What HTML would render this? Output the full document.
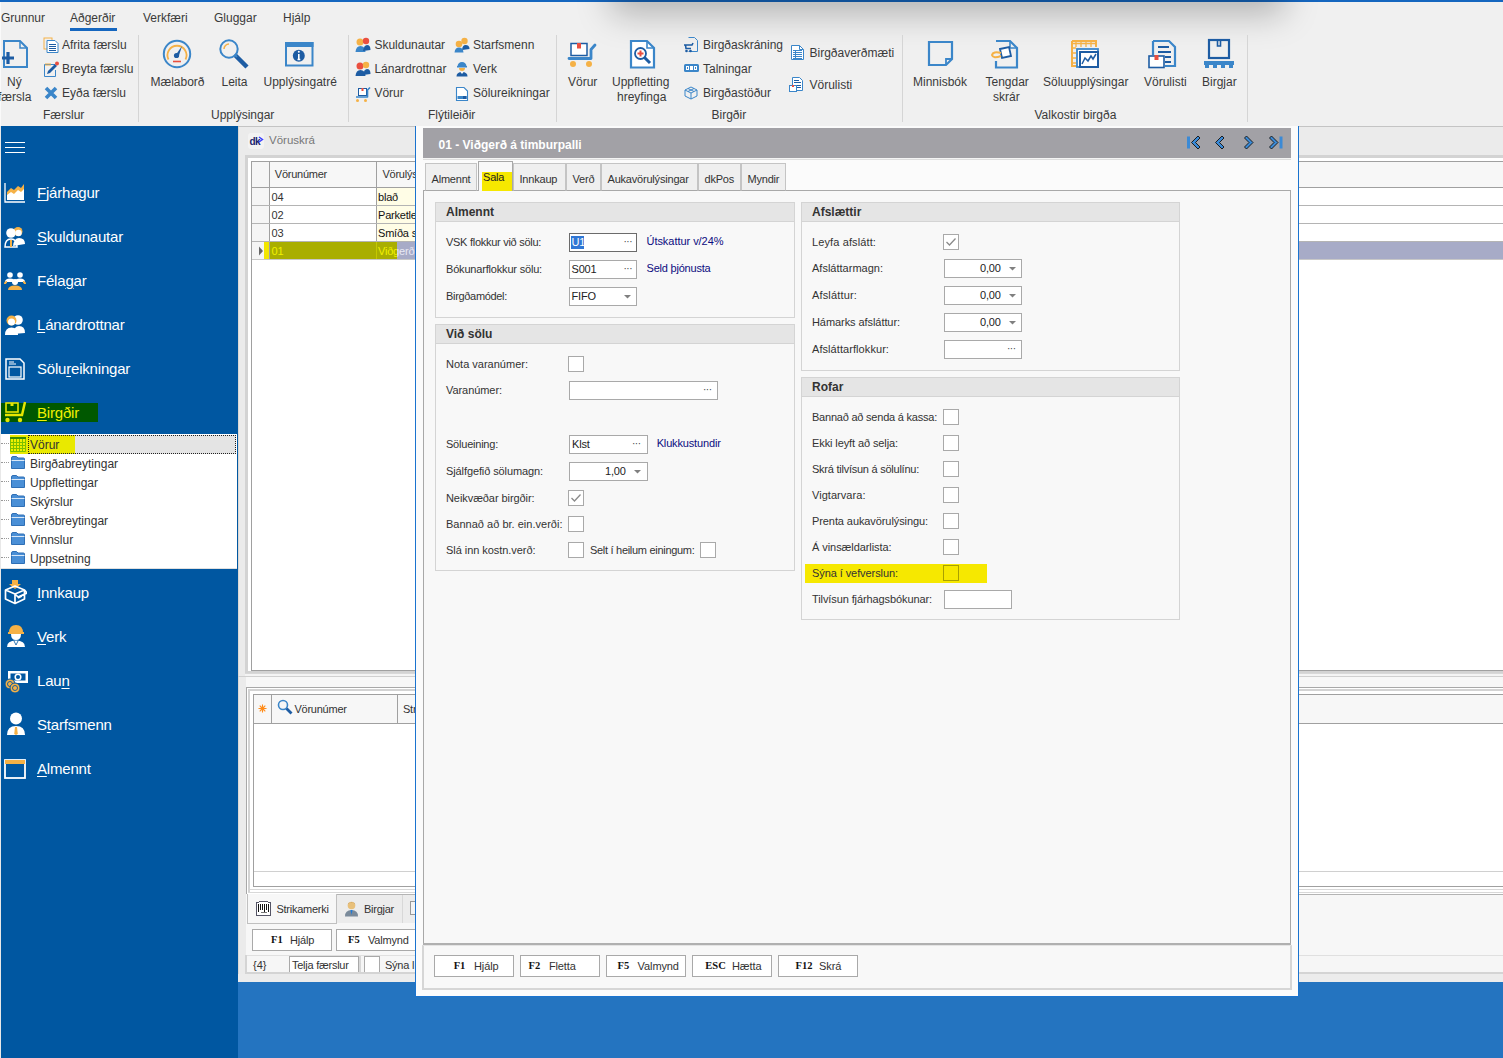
<!DOCTYPE html>
<html><head><meta charset="utf-8">
<style>
*{margin:0;padding:0;box-sizing:border-box}
html,body{width:1503px;height:1058px;overflow:hidden;background:#2474c0;font-family:"Liberation Sans",sans-serif;color:#333;position:relative}
.a{position:absolute}
.t{position:absolute;white-space:nowrap;line-height:1}
.cb{position:absolute;width:16px;height:16px;background:#fff;border:1px solid #a9a9a9}
.inp{position:absolute;background:#fff;border:1px solid #a9a9a9}
</style></head><body>
<div class="a" style="left:0px;top:0px;width:1503px;height:126px;background:#f0f0f0;"></div>
<div class="a" style="left:0px;top:0px;width:1503px;height:2px;background:#1566bf;"></div>
<div class="a" style="left:625px;top:-40px;width:645px;height:40px;box-shadow:0 0 34px 14px rgba(0,0,0,0.26)"></div>
<div class="a" style="left:0px;top:2px;width:1px;height:124px;background:#fafafa;"></div>
<div class="t" style="left:1px;top:12.00px;font-size:12px;color:#3a3a3a;">Grunnur</div>
<div class="t" style="left:70px;top:12.00px;font-size:12px;color:#3a3a3a;">Aðgerðir</div>
<div class="t" style="left:143px;top:12.00px;font-size:12px;color:#3a3a3a;">Verkfæri</div>
<div class="t" style="left:214px;top:12.00px;font-size:12px;color:#3a3a3a;">Gluggar</div>
<div class="t" style="left:283px;top:12.00px;font-size:12px;color:#3a3a3a;">Hjálp</div>
<div class="a" style="left:70px;top:28px;width:47px;height:3px;background:#1566bf;"></div>
<div class="a" style="left:138px;top:35px;width:1px;height:87px;background:#d5d5d5;"></div>
<div class="a" style="left:348px;top:35px;width:1px;height:87px;background:#d5d5d5;"></div>
<div class="a" style="left:556px;top:35px;width:1px;height:87px;background:#d5d5d5;"></div>
<div class="a" style="left:902px;top:35px;width:1px;height:87px;background:#d5d5d5;"></div>
<div class="a" style="left:1247px;top:35px;width:1px;height:87px;background:#d5d5d5;"></div>
<div class="t" style="left:43px;top:109.00px;font-size:12px;color:#3a3a3a;">Færslur</div>
<div class="t" style="left:211px;top:109.00px;font-size:12px;color:#3a3a3a;">Upplýsingar</div>
<div class="t" style="left:428px;top:109.00px;font-size:12px;color:#3a3a3a;">Flýtileiðir</div>
<div class="t" style="left:711.5px;top:109.00px;font-size:12px;color:#3a3a3a;">Birgðir</div>
<div class="t" style="left:1034.5px;top:109.00px;font-size:12px;color:#3a3a3a;">Valkostir birgða</div>
<svg class="a" style="left:1px;top:38px" width="30" height="32" viewBox="0 0 30 32"><path d="M3 3 H19 L26 10 V29 H3 Z" fill="none" stroke="#3b86c9" stroke-width="2"/><path d="M19 3 V10 H26" fill="none" stroke="#3b86c9" stroke-width="1.5"/><path d="M1 20 H13 M7 14 V26" stroke="#1d5ca3" stroke-width="3.2"/></svg>
<div class="t" style="left:7px;top:76.00px;font-size:12px;color:#3a3a3a;">Ný</div>
<div class="t" style="left:-2px;top:91.00px;font-size:12px;color:#3a3a3a;">færsla</div>
<svg class="a" style="left:43px;top:37px" width="16" height="16" viewBox="0 0 16 16"><rect x="1" y="1" width="8" height="11" fill="none" stroke="#f5b146" stroke-width="1"/><path d="M4 3.5 H12 L15 6.5 V15.5 H4 Z" fill="#fff" stroke="#3b86c9" stroke-width="1"/><path d="M6 7.5 H13 M6 9.5 H13 M6 11.5 H13 M6 13.5 H13" stroke="#1d5ca3" stroke-width="1"/></svg>
<div class="t" style="left:62px;top:39.00px;font-size:12px;color:#3a3a3a;">Afrita færslu</div>
<svg class="a" style="left:43px;top:61px" width="16" height="16" viewBox="0 0 16 16"><path d="M1.5 3.5 H12 M1.5 3.5 V15.5 H12.5 V9" fill="none" stroke="#3b86c9" stroke-width="1"/><path d="M3 2 V5 M5 2 V5 M7 2 V5" stroke="#f5b146" stroke-width="1"/><path d="M4 13 L5 10 L12 3 L14 5 L7 12 Z" fill="#1d5ca3"/><circle cx="14" cy="2.5" r="2" fill="#ea4f3f"/></svg>
<div class="t" style="left:62px;top:63.00px;font-size:12px;color:#3a3a3a;">Breyta færslu</div>
<svg class="a" style="left:44px;top:86px" width="14" height="14" viewBox="0 0 14 14"><path d="M2 2 L12 12 M12 2 L2 12" stroke="#3b86c9" stroke-width="3.6"/></svg>
<div class="t" style="left:62px;top:87.00px;font-size:12px;color:#3a3a3a;">Eyða færslu</div>
<svg class="a" style="left:162px;top:39px" width="30" height="30" viewBox="0 0 30 30"><circle cx="15" cy="15" r="13.2" fill="none" stroke="#3b86c9" stroke-width="2"/><path d="M6.5 20.5 A9.5 9.5 0 1 1 23.5 20.5" fill="none" stroke="#f5b146" stroke-width="1.8"/><path d="M13 17 L20 7 L16.5 18 Z" fill="#1d5ca3"/><circle cx="14.5" cy="16.5" r="2.6" fill="#1d5ca3"/><path d="M11 22.5 H19" stroke="#ea4f3f" stroke-width="1.6"/></svg>
<div class="t" style="left:150.5px;top:76.00px;font-size:12px;color:#3a3a3a;">Mælaborð</div>
<svg class="a" style="left:218px;top:38px" width="32" height="32" viewBox="0 0 32 32"><circle cx="11" cy="11" r="8.7" fill="none" stroke="#3b86c9" stroke-width="2"/><path d="M6 11 A5 5 0 0 1 11 6" fill="none" stroke="#f5b146" stroke-width="1.5"/><path d="M17.5 17.5 L29 29" stroke="#1d5ca3" stroke-width="4.5"/><path d="M16.5 16.5 L19 19" stroke="#3b86c9" stroke-width="2"/></svg>
<div class="t" style="left:221.5px;top:76.00px;font-size:12px;color:#3a3a3a;">Leita</div>
<svg class="a" style="left:284px;top:41px" width="30" height="26" viewBox="0 0 30 26"><rect x="2" y="2" width="26.5" height="22.5" fill="none" stroke="#3b86c9" stroke-width="2"/><rect x="1" y="1" width="28.5" height="5" fill="#3b86c9"/><circle cx="14.8" cy="14.8" r="6" fill="#1d5ca3"/><path d="M14.8 13 V18.5 M13.5 18.5 H16.3" stroke="#fff" stroke-width="1.6"/><circle cx="14.8" cy="10.8" r="1" fill="#fff"/></svg>
<div class="t" style="left:263.5px;top:76.00px;font-size:12px;color:#3a3a3a;">Upplýsingatré</div>
<svg class="a" style="left:355px;top:37px" width="16" height="16" viewBox="0 0 16 16"><circle cx="5" cy="5" r="3.5" fill="#f5b146"/><circle cx="11" cy="4" r="3.2" fill="#ea4f3f"/><path d="M0.5 15 Q1 9 5.5 9 Q10 9 10.5 15 Z" fill="#3b86c9"/><path d="M8 14 Q9 8 12 8 Q15.5 8 15.5 13 Z" fill="#1d5ca3"/></svg>
<div class="t" style="left:374.4px;top:39.00px;font-size:12px;color:#3a3a3a;">Skuldunautar</div>
<svg class="a" style="left:355px;top:61px" width="16" height="16" viewBox="0 0 16 16"><circle cx="5" cy="5" r="3.5" fill="#ea4f3f"/><circle cx="11" cy="4" r="3.2" fill="#f5b146"/><path d="M0.5 15 Q1 9 5.5 9 Q10 9 10.5 15 Z" fill="#1d5ca3"/><path d="M8 14 Q9 8 12 8 Q15.5 8 15.5 13 Z" fill="#1d5ca3"/></svg>
<div class="t" style="left:374.4px;top:63.00px;font-size:12px;color:#3a3a3a;">Lánardrottnar</div>
<svg class="a" style="left:355px;top:86px" width="16" height="16" viewBox="0 0 16 16"><rect x="3.5" y="2.5" width="8" height="7" fill="#fff" stroke="#1d5ca3" stroke-width="1"/><rect x="6.5" y="2" width="2" height="3" fill="#ea4f3f"/><path d="M1 11 H12.5 V4 L15 1.5" fill="none" stroke="#3b86c9" stroke-width="1.6" stroke-linejoin="round"/><circle cx="2.5" cy="14.5" r="1.5" fill="#f5b146"/><circle cx="10.5" cy="14.5" r="1.5" fill="#f5b146"/></svg>
<div class="t" style="left:374.4px;top:87.00px;font-size:12px;color:#3a3a3a;">Vörur</div>
<svg class="a" style="left:454px;top:37px" width="16" height="16" viewBox="0 0 16 16"><circle cx="10.5" cy="4" r="3.2" fill="#f5b146"/><circle cx="5" cy="7" r="3.3" fill="#f5b146"/><path d="M8 13 Q8.5 8 11.5 8 Q15.5 8 15.5 12 Z" fill="#1d5ca3"/><path d="M0.5 15.5 Q1 10.5 5 10.5 Q9 10.5 9.5 15.5 Z" fill="#3b86c9"/></svg>
<div class="t" style="left:473px;top:39.00px;font-size:12px;color:#3a3a3a;">Starfsmenn</div>
<svg class="a" style="left:456px;top:61px" width="12" height="16" viewBox="0 0 12 16"><path d="M1.5 5.5 A4.5 4.5 0 0 1 10.5 5.5 Z" fill="#3b86c9"/><rect x="1" y="5" width="10" height="1.5" fill="#3b86c9"/><path d="M3 7 Q3 10 6 10 Q9 10 9 7 Z" fill="#f5b146"/><path d="M0.5 15.5 Q0.5 11 6 11 Q11.5 11 11.5 15.5 Z" fill="#1d5ca3"/><path d="M4.5 11 L6 13 L7.5 11" fill="#fff"/></svg>
<div class="t" style="left:473px;top:63.00px;font-size:12px;color:#3a3a3a;">Verk</div>
<svg class="a" style="left:455px;top:86px" width="14" height="16" viewBox="0 0 14 16"><path d="M1.5 1.5 H9 L12.5 5 V14.5 H1.5 Z" fill="#fff" stroke="#3b86c9" stroke-width="1.1"/><rect x="2.5" y="10" width="9" height="3" fill="#3b86c9"/><rect x="8" y="10" width="3.5" height="3" fill="#1d5ca3"/></svg>
<div class="t" style="left:473px;top:87.00px;font-size:12px;color:#3a3a3a;">Sölureikningar</div>
<svg class="a" style="left:567px;top:39px" width="31" height="30" viewBox="0 0 31 30"><rect x="4" y="4.5" width="16" height="12" fill="#fff" stroke="#1d5ca3" stroke-width="1.5"/><rect x="10" y="4" width="4" height="5.5" fill="#ea4f3f"/><path d="M2 19.5 H24 V10.5 L28 6" fill="none" stroke="#3b86c9" stroke-width="2.8" stroke-linecap="round" stroke-linejoin="round"/><circle cx="6" cy="25" r="3" fill="#f5b146"/><circle cx="22" cy="25" r="3" fill="#f5b146"/></svg>
<div class="t" style="left:568px;top:76.00px;font-size:12px;color:#3a3a3a;">Vörur</div>
<svg class="a" style="left:629px;top:39px" width="27" height="30" viewBox="0 0 27 30"><path d="M2 2 H18 L25 9 V28.5 H2 Z" fill="#fff" stroke="#3b86c9" stroke-width="2.2"/><path d="M18 2 V9 H25" fill="none" stroke="#3b86c9" stroke-width="1.6"/><circle cx="11.5" cy="14.5" r="5.5" fill="#fff" stroke="#1d5ca3" stroke-width="1.8"/><path d="M11.5 11.5 V17.5 M8.5 14.5 H14.5" stroke="#ea4f3f" stroke-width="2"/><path d="M15.5 18.5 L21 24" stroke="#1d5ca3" stroke-width="3"/></svg>
<div class="t" style="left:612px;top:76.00px;font-size:12px;color:#3a3a3a;">Uppfletting</div>
<div class="t" style="left:617px;top:91.00px;font-size:12px;color:#3a3a3a;">hreyfinga</div>
<svg class="a" style="left:683px;top:37px" width="16" height="16" viewBox="0 0 16 16"><path d="M5.5 0.5 H11.5 L14.5 3.5 V14.5 H5.5" fill="none" stroke="#3b86c9" stroke-width="1"/><path d="M1 8 H9 L10 6 M2.5 8 L3 11.5 H8" fill="none" stroke="#1d5ca3" stroke-width="1.6"/><circle cx="3.5" cy="14" r="1.3" fill="#1d5ca3"/><circle cx="7.5" cy="14" r="1.3" fill="#1d5ca3"/></svg>
<div class="t" style="left:703px;top:39.00px;font-size:12px;color:#3a3a3a;">Birgðaskráning</div>
<svg class="a" style="left:684px;top:64px" width="15" height="8" viewBox="0 0 15 8"><rect x="0" y="0" width="15" height="8" rx="1.5" fill="#3b86c9"/><rect x="2" y="2" width="3" height="4" fill="#fff"/><rect x="6" y="2" width="3" height="4" fill="#fff"/><rect x="10" y="2" width="3" height="4" fill="#fff"/><rect x="3" y="3" width="1" height="2" fill="#3b86c9"/><rect x="11" y="3" width="1" height="2" fill="#3b86c9"/></svg>
<div class="t" style="left:703px;top:63.00px;font-size:12px;color:#3a3a3a;">Talningar</div>
<svg class="a" style="left:684px;top:86px" width="14" height="14" viewBox="0 0 14 14"><path d="M7 1 L13 4 V10 L7 13 L1 10 V4 Z M1 4 L7 7 L13 4 M7 7 V13 M4 2.5 L10 5.5 M10 2.5 L4 5.5" fill="none" stroke="#3b86c9" stroke-width="1"/></svg>
<div class="t" style="left:703px;top:87.00px;font-size:12px;color:#3a3a3a;">Birgðastöður</div>
<svg class="a" style="left:791px;top:45px" width="13" height="16" viewBox="0 0 13 16"><path d="M0.5 0.5 H8.5 L12.5 4.5 V14.5 H0.5 Z" fill="#fff" stroke="#3b86c9" stroke-width="1"/><path d="M8.5 0.5 V4.5 H12.5" fill="none" stroke="#3b86c9" stroke-width="1"/><path d="M2 5.5 H11 M2 7.5 H11 M2 9.5 H11 M2 11.5 H11 M2 13.5 H11 M4.5 5 V14" stroke="#3b86c9" stroke-width="1"/></svg>
<div class="t" style="left:809.5px;top:47.00px;font-size:12px;color:#3a3a3a;">Birgðaverðmæti</div>
<svg class="a" style="left:789px;top:77px" width="15" height="17" viewBox="0 0 15 17"><path d="M3.5 0.5 H10.5 L13.5 3.5 V13.5 H3.5 Z" fill="#fff" stroke="#3b86c9" stroke-width="1"/><path d="M5 3.5 H10 M5 5.5 H12 M8 8.5 H12 M8 10.5 H12" stroke="#1d5ca3" stroke-width="1"/><rect x="0.5" y="8.5" width="7" height="6" fill="#fff" stroke="#3b86c9" stroke-width="1"/><rect x="3" y="8" width="2" height="2" fill="#ea4f3f"/></svg>
<div class="t" style="left:809.5px;top:79.00px;font-size:12px;color:#3a3a3a;">Vörulisti</div>
<svg class="a" style="left:927px;top:40px" width="28" height="28" viewBox="0 0 28 28"><path d="M2 2 H25 V19 L19 25 H2 Z" fill="none" stroke="#3b86c9" stroke-width="2.2"/><path d="M25 19 H19 V25" fill="none" stroke="#3b86c9" stroke-width="1.8"/></svg>
<div class="t" style="left:913px;top:76.00px;font-size:12px;color:#3a3a3a;">Minnisbók</div>
<svg class="a" style="left:990px;top:39px" width="29" height="30" viewBox="0 0 29 30"><path d="M6 2 H20 L27 9 V28.5 H6 V22" fill="none" stroke="#3b86c9" stroke-width="2.2"/><path d="M20 2 V9 H27" fill="none" stroke="#3b86c9" stroke-width="1.6"/><path d="M10 10 L19 8 L21 17 L12 19 Z" fill="#fff" stroke="#1d5ca3" stroke-width="1.8"/><path d="M11 14 Q3 12 2 16 Q3 20 11 17" fill="none" stroke="#f5b146" stroke-width="2"/></svg>
<div class="t" style="left:985.5px;top:76.00px;font-size:12px;color:#3a3a3a;">Tengdar</div>
<div class="t" style="left:993px;top:91.00px;font-size:12px;color:#3a3a3a;">skrár</div>
<svg class="a" style="left:1070px;top:39px" width="30" height="30" viewBox="0 0 30 30"><path d="M2 2 H26 V8 M2 2 V27 H8" fill="none" stroke="#f5b146" stroke-width="2"/><path d="M2 4.5 H26 M6 2 V8 M11 2 V8 M16 2 V8 M21 2 V8 M2 9 H6 M2 14 H6 M2 19 H6 M2 24 H6" stroke="#f5b146" stroke-width="1.3"/><rect x="7" y="10" width="21" height="18" fill="#fff" stroke="#3b86c9" stroke-width="1.8"/><rect x="10" y="13" width="18" height="15" fill="#fff" stroke="#1d5ca3" stroke-width="2"/><path d="M12 25 L15 19 L18 22 L21 17 L23 20 L26 15" fill="none" stroke="#1d5ca3" stroke-width="1.5"/></svg>
<div class="t" style="left:1043px;top:76.00px;font-size:12px;color:#3a3a3a;">Söluupplýsingar</div>
<svg class="a" style="left:1147px;top:39px" width="31" height="30" viewBox="0 0 31 30"><path d="M6 2 H22 L28 8 V27 H18" fill="none" stroke="#3b86c9" stroke-width="2.2"/><path d="M6 2 V16" stroke="#3b86c9" stroke-width="2.2"/><path d="M11 8 H22 M11 13 H24 M18 18 H24 M18 23 H24" stroke="#1d5ca3" stroke-width="2"/><rect x="2" y="17" width="15" height="11.5" fill="#fff" stroke="#1d5ca3" stroke-width="1.6"/><rect x="7.5" y="16" width="4" height="5" fill="#ea4f3f"/></svg>
<div class="t" style="left:1144px;top:76.00px;font-size:12px;color:#3a3a3a;">Vörulisti</div>
<svg class="a" style="left:1203px;top:38px" width="32" height="30" viewBox="0 0 32 30"><rect x="6" y="2" width="20" height="18" fill="none" stroke="#1d5ca3" stroke-width="2.2"/><path d="M14.5 2 V8 H17.5 V2" fill="none" stroke="#1d5ca3" stroke-width="1.6"/><rect x="1" y="23" width="30" height="4" fill="#3b86c9"/><rect x="2" y="26" width="4" height="4" fill="#3b86c9"/><rect x="10" y="26" width="4" height="4" fill="#3b86c9"/><rect x="18" y="26" width="4" height="4" fill="#3b86c9"/><rect x="26" y="26" width="4" height="4" fill="#3b86c9"/></svg>
<div class="t" style="left:1202px;top:76.00px;font-size:12px;color:#3a3a3a;">Birgjar</div>
<div class="a" style="left:0px;top:126px;width:238px;height:932px;background:#2474c0;"></div>
<div class="a" style="left:1px;top:126px;width:237px;height:932px;background:#0057a1;"></div>
<div class="a" style="left:0px;top:126px;width:1px;height:932px;background:#e8e8e8;"></div>
<div class="a" style="left:5px;top:142px;width:20px;height:1px;background:#ffffff;"></div>
<div class="a" style="left:5px;top:147px;width:20px;height:1px;background:#ffffff;"></div>
<div class="a" style="left:5px;top:152px;width:20px;height:1px;background:#ffffff;"></div>
<div class="t" style="left:37px;top:185.00px;font-size:15px;color:#fff;letter-spacing:-0.2px;"><u style="text-decoration-thickness:1px;text-underline-offset:2px">F</u>járhagur</div>
<div class="t" style="left:37px;top:229.00px;font-size:15px;color:#fff;letter-spacing:-0.2px;"><u style="text-decoration-thickness:1px;text-underline-offset:2px">S</u>kuldunautar</div>
<div class="t" style="left:37px;top:273.00px;font-size:15px;color:#fff;letter-spacing:-0.2px;">Féla<u style="text-decoration-thickness:1px;text-underline-offset:2px">g</u>ar</div>
<div class="t" style="left:37px;top:317.00px;font-size:15px;color:#fff;letter-spacing:-0.2px;"><u style="text-decoration-thickness:1px;text-underline-offset:2px">L</u>ánardrottnar</div>
<div class="t" style="left:37px;top:361.00px;font-size:15px;color:#fff;letter-spacing:-0.2px;">Sölu<u style="text-decoration-thickness:1px;text-underline-offset:2px">r</u>eikningar</div>
<svg class="a" style="left:3px;top:182px" width="24" height="22" viewBox="0 0 24 22"><path d="M2 1 V20 H22" fill="none" stroke="#fff" stroke-width="1.3"/><path d="M4 10 L8 6 L11 8 L15 4 L18 6 L21 2 V18 H4 Z" fill="#f5b146"/><path d="M4 13 L8 10 L11 12 L15 8 L18 10 L21 7 V18 H4 Z" fill="#fff"/></svg>
<svg class="a" style="left:4px;top:226px" width="22" height="22" viewBox="0 0 22 22"><circle cx="14" cy="5.5" r="4.5" fill="#f5b146"/><circle cx="14.5" cy="7" r="3.2" fill="#fff"/><path d="M9 20 Q10 12 15 12 Q21 12 21 18 Z" fill="#fff"/><circle cx="7" cy="7" r="4.8" fill="#fff"/><path d="M1 21 Q1 13 7 13 Q13 13 13 21 Z" fill="none" stroke="#fff" stroke-width="1.5"/><path d="M7 14 V21" stroke="#f5b146" stroke-width="2"/></svg>
<svg class="a" style="left:4px;top:270px" width="22" height="22" viewBox="0 0 22 22"><circle cx="6" cy="5" r="2.8" fill="#fff"/><circle cx="16" cy="5" r="2.8" fill="#fff"/><path d="M1 12 Q1 8.5 6 8.5 Q11 8.5 11 12 Z M11 12 Q11 8.5 16 8.5 Q21 8.5 21 12 Z" fill="#fff"/><circle cx="11" cy="12" r="3" fill="#fff"/><path d="M4 20 Q4 15.5 11 15.5 Q18 15.5 18 20 Z" fill="#f5b146"/><path d="M1 14 Q1 12 3 12 M21 14 Q21 12 19 12" stroke="#f5b146" stroke-width="2" fill="none"/></svg>
<svg class="a" style="left:4px;top:314px" width="22" height="22" viewBox="0 0 22 22"><circle cx="14" cy="6" r="4.8" fill="#fff"/><path d="M9 20 Q10 12 15 12 Q21 12 21 19 Z" fill="#fff"/><circle cx="7.5" cy="6.5" r="5" fill="#f5b146"/><circle cx="7.5" cy="8" r="3.5" fill="#fff"/><path d="M1 21 Q1 13.5 7.5 13.5 Q14 13.5 14 21 Z" fill="#fff"/></svg>
<svg class="a" style="left:4px;top:358px" width="22" height="22" viewBox="0 0 22 22"><path d="M2 1 H16 L20 5 V21 H2 Z" fill="none" stroke="#fff" stroke-width="1.5"/><rect x="5" y="9" width="12" height="10" fill="none" stroke="#fff" stroke-width="1.2"/><path d="M5 4 H10 M5 6 H12" stroke="#fff" stroke-width="1"/></svg>
<div class="a" style="left:1px;top:403px;width:97px;height:19px;background:#005800;"></div>
<div class="t" style="left:37px;top:405.00px;font-size:15px;color:#f0f000;letter-spacing:-0.2px;"><u style="text-decoration-thickness:1px;text-underline-offset:2px">B</u>irgðir</div>
<svg class="a" style="left:4px;top:401px" width="24" height="22" viewBox="0 0 24 22"><rect x="2" y="2" width="12" height="9" fill="none" stroke="#e6e600" stroke-width="1.6"/><rect x="6.5" y="2" width="3" height="3" fill="#e6e600"/><path d="M1 14 H18 L21 1" fill="none" stroke="#e6e600" stroke-width="2.5"/><circle cx="3.5" cy="19" r="2.2" fill="#e6e600"/><circle cx="16" cy="19" r="2.2" fill="#e6e600"/></svg>
<div class="a" style="left:1px;top:434px;width:236px;height:135px;background:#ffffff;"></div>
<div class="a" style="left:237px;top:434px;width:1px;height:135px;background:#0057a1;"></div>
<div class="a" style="left:1px;top:568px;width:236px;height:1px;background:#e0e0e0;"></div>
<div class="a" style="left:28px;top:435px;width:208px;height:19px;background:#e4e4e4;"></div>
<div class="a" style="left:10px;top:435px;width:65px;height:19px;background:#e9e900;"></div>
<div class="a" style="left:28px;top:435px;width:208px;height:19px;background:transparent;border:1px dotted #222"></div>
<svg class="a" style="left:10px;top:437px" width="16" height="15" viewBox="0 0 16 15"><rect x="0" y="0" width="16" height="15" fill="#f0f000"/><rect x="0" y="0" width="16" height="2" fill="#3a8a00"/><path d="M0.5 2 V14.5 H15.5 V2 M0.5 5.5 H15.5 M0.5 8.5 H15.5 M0.5 11.5 H15.5 M3.5 2 V15 M6.5 2 V15 M9.5 2 V15 M12.5 2 V15" fill="none" stroke="#7cc000" stroke-width="1"/></svg>
<div class="t" style="left:30px;top:439.00px;font-size:12px;color:#333;">Vörur</div>
<div class="a" style="left:1px;top:462px;width:8px;height:1px;border-top:1px dotted #999"></div>
<svg class="a" style="left:11px;top:456px" width="14" height="13" viewBox="0 0 14 13"><path d="M0.5 2 Q0.5 0.5 2 0.5 H5.5 L7 2 H12.5 Q13.5 2 13.5 3 V12.5 H0.5 Z" fill="#4a8fd6" stroke="#2f6fb5" stroke-width="1"/><path d="M0.5 4.5 H13.5" stroke="#fff" stroke-width="0.8"/></svg>
<div class="t" style="left:30px;top:458.00px;font-size:12px;color:#333;">Birgðabreytingar</div>
<div class="a" style="left:1px;top:481px;width:8px;height:1px;border-top:1px dotted #999"></div>
<svg class="a" style="left:11px;top:475px" width="14" height="13" viewBox="0 0 14 13"><path d="M0.5 2 Q0.5 0.5 2 0.5 H5.5 L7 2 H12.5 Q13.5 2 13.5 3 V12.5 H0.5 Z" fill="#4a8fd6" stroke="#2f6fb5" stroke-width="1"/><path d="M0.5 4.5 H13.5" stroke="#fff" stroke-width="0.8"/></svg>
<div class="t" style="left:30px;top:477.00px;font-size:12px;color:#333;">Uppflettingar</div>
<div class="a" style="left:1px;top:500px;width:8px;height:1px;border-top:1px dotted #999"></div>
<svg class="a" style="left:11px;top:494px" width="14" height="13" viewBox="0 0 14 13"><path d="M0.5 2 Q0.5 0.5 2 0.5 H5.5 L7 2 H12.5 Q13.5 2 13.5 3 V12.5 H0.5 Z" fill="#4a8fd6" stroke="#2f6fb5" stroke-width="1"/><path d="M0.5 4.5 H13.5" stroke="#fff" stroke-width="0.8"/></svg>
<div class="t" style="left:30px;top:496.00px;font-size:12px;color:#333;">Skýrslur</div>
<div class="a" style="left:1px;top:519px;width:8px;height:1px;border-top:1px dotted #999"></div>
<svg class="a" style="left:11px;top:513px" width="14" height="13" viewBox="0 0 14 13"><path d="M0.5 2 Q0.5 0.5 2 0.5 H5.5 L7 2 H12.5 Q13.5 2 13.5 3 V12.5 H0.5 Z" fill="#4a8fd6" stroke="#2f6fb5" stroke-width="1"/><path d="M0.5 4.5 H13.5" stroke="#fff" stroke-width="0.8"/></svg>
<div class="t" style="left:30px;top:515.00px;font-size:12px;color:#333;">Verðbreytingar</div>
<div class="a" style="left:1px;top:538px;width:8px;height:1px;border-top:1px dotted #999"></div>
<svg class="a" style="left:11px;top:532px" width="14" height="13" viewBox="0 0 14 13"><path d="M0.5 2 Q0.5 0.5 2 0.5 H5.5 L7 2 H12.5 Q13.5 2 13.5 3 V12.5 H0.5 Z" fill="#4a8fd6" stroke="#2f6fb5" stroke-width="1"/><path d="M0.5 4.5 H13.5" stroke="#fff" stroke-width="0.8"/></svg>
<div class="t" style="left:30px;top:534.00px;font-size:12px;color:#333;">Vinnslur</div>
<div class="a" style="left:1px;top:557px;width:8px;height:1px;border-top:1px dotted #999"></div>
<svg class="a" style="left:11px;top:551px" width="14" height="13" viewBox="0 0 14 13"><path d="M0.5 2 Q0.5 0.5 2 0.5 H5.5 L7 2 H12.5 Q13.5 2 13.5 3 V12.5 H0.5 Z" fill="#4a8fd6" stroke="#2f6fb5" stroke-width="1"/><path d="M0.5 4.5 H13.5" stroke="#fff" stroke-width="0.8"/></svg>
<div class="t" style="left:30px;top:553.00px;font-size:12px;color:#333;">Uppsetning</div>
<div class="a" style="left:1px;top:443px;width:8px;height:1px;border-top:1px dotted #999"></div>
<div class="t" style="left:37px;top:585.00px;font-size:15px;color:#fff;letter-spacing:-0.2px;"><u style="text-decoration-thickness:1px;text-underline-offset:2px">I</u>nnkaup</div>
<div class="t" style="left:37px;top:629.00px;font-size:15px;color:#fff;letter-spacing:-0.2px;"><u style="text-decoration-thickness:1px;text-underline-offset:2px">V</u>erk</div>
<div class="t" style="left:37px;top:673.00px;font-size:15px;color:#fff;letter-spacing:-0.2px;">Lau<u style="text-decoration-thickness:1px;text-underline-offset:2px">n</u></div>
<div class="t" style="left:37px;top:717.00px;font-size:15px;color:#fff;letter-spacing:-0.2px;">S<u style="text-decoration-thickness:1px;text-underline-offset:2px">t</u>arfsmenn</div>
<div class="t" style="left:37px;top:761.00px;font-size:15px;color:#fff;letter-spacing:-0.2px;"><u style="text-decoration-thickness:1px;text-underline-offset:2px">A</u>lmennt</div>
<svg class="a" style="left:3px;top:579px" width="24" height="26" viewBox="0 0 24 26"><path d="M9 1 H15 V5 H18 L12 10 L6 5 H9 Z" fill="#f5b146"/><path d="M2.5 11 L12 7 L21.5 11 L12 15 Z M2.5 11 V20 L12 24.5 L21.5 20 V11 M12 15 V24.5 M21.5 11 L24 14 L15 18 L12 15" fill="none" stroke="#fff" stroke-width="1.7" stroke-linejoin="round"/><path d="M15 19 L19 17" stroke="#fff" stroke-width="1.5"/></svg>
<svg class="a" style="left:5px;top:624px" width="22" height="24" viewBox="0 0 22 24"><path d="M4 9 Q4 1 11 1 Q18 1 18 9 Z" fill="#f5b146"/><rect x="3" y="8" width="16" height="2" fill="#f5b146"/><path d="M6 10 Q6 16 11 16 Q16 16 16 10 Z" fill="#fff"/><path d="M2 23 Q2 16.5 11 16.5 Q20 16.5 20 23 Z" fill="#fff"/><path d="M9 17 L11 21 L13 17" fill="none" stroke="#0057a1" stroke-width="0.8"/></svg>
<svg class="a" style="left:3px;top:669px" width="26" height="24" viewBox="0 0 26 24"><rect x="5" y="2" width="20" height="12" fill="#fff"/><rect x="7.5" y="4.5" width="15" height="7" fill="#0057a1"/><circle cx="15" cy="8" r="2.8" fill="none" stroke="#fff" stroke-width="1.5"/><circle cx="7" cy="15" r="5" fill="#f5b146" stroke="#0057a1" stroke-width="1"/><circle cx="7" cy="15" r="2.5" fill="none" stroke="#0057a1" stroke-width="0.9"/><circle cx="12" cy="19" r="5" fill="#f5b146" stroke="#0057a1" stroke-width="1"/><circle cx="12" cy="19" r="2.5" fill="none" stroke="#0057a1" stroke-width="0.9"/></svg>
<svg class="a" style="left:5px;top:712px" width="22" height="24" viewBox="0 0 22 24"><circle cx="11" cy="6.5" r="6" fill="#fff"/><path d="M2 23 Q2 14 11 14 Q20 14 20 23 Z" fill="#fff"/><path d="M10 15 H12 L12.8 22 L11 23 L9.2 22 Z" fill="#f5b146"/></svg>
<svg class="a" style="left:4px;top:759px" width="22" height="20" viewBox="0 0 22 20"><rect x="1" y="1" width="20" height="18" fill="none" stroke="#fff" stroke-width="1.8"/><rect x="1" y="1" width="20" height="4" fill="#f5b146"/></svg>
<div class="a" style="left:238px;top:126px;width:1265px;height:856px;background:#ebebeb;"></div>
<div class="a" style="left:238px;top:126px;width:1265px;height:1px;background:#c4c4c4;"></div>
<div class="a" style="left:238px;top:127px;width:1px;height:855px;background:#dcd8d4;"></div>
<div class="a" style="left:248px;top:133px;width:16px;height:16px;background:#f3f3f3;border-radius:3px"></div>
<div class="t" style="left:249.5px;top:137.00px;font-size:10px;color:#1a1f6e;letter-spacing:-0.6px;"><b>dk</b></div>
<svg class="a" style="left:258px;top:136px" width="6" height="7" viewBox="0 0 6 7"><path d="M1 1 L4.5 3.5 L1 6" fill="none" stroke="#3a3aff" stroke-width="1.4"/></svg>
<div class="t" style="left:269px;top:135.00px;font-size:11.5px;color:#777;">Vöruskrá</div>
<div class="a" style="left:245px;top:155px;width:1258px;height:519px;background:#d3d3d3;"></div>
<div class="a" style="left:248px;top:158px;width:1255px;height:513px;background:#ffffff;"></div>
<div class="a" style="left:251px;top:161px;width:1252px;height:510px;background:#ffffff;border:1px solid #a0a0a0;border-right:none"></div>
<div class="a" style="left:252px;top:162px;width:1251px;height:25px;background:#f7f7f7;"></div>
<div class="a" style="left:252px;top:162px;width:17px;height:97px;background:#f5f5f5;"></div>
<div class="a" style="left:377px;top:188px;width:40px;height:53px;background:#fffde6;"></div>
<div class="a" style="left:397px;top:242px;width:1106px;height:17px;background:#a7abc7;"></div>
<div class="a" style="left:269px;top:242px;width:128px;height:17px;background:#a9ae00;"></div>
<div class="a" style="left:264px;top:242px;width:5px;height:17px;background:#f2e600;"></div>
<div class="a" style="left:376px;top:242px;width:1px;height:17px;background:#c4c800;"></div>
<div class="a" style="left:252px;top:187px;width:1251px;height:1px;background:#a0a0a0;"></div>
<div class="a" style="left:269px;top:162px;width:1px;height:97px;background:#a0a0a0;"></div>
<div class="a" style="left:376px;top:162px;width:1px;height:80px;background:#a0a0a0;"></div>
<div class="a" style="left:252px;top:205px;width:1251px;height:1px;background:#b4b4b4;"></div>
<div class="a" style="left:252px;top:223px;width:1251px;height:1px;background:#b4b4b4;"></div>
<div class="a" style="left:252px;top:241px;width:1251px;height:1px;background:#b4b4b4;"></div>
<div class="a" style="left:252px;top:259px;width:1251px;height:1px;background:#c8c8c8;"></div>
<svg class="a" style="left:258px;top:246px" width="6" height="10" viewBox="0 0 6 10"><path d="M1 0.5 L5 5 L1 9.5 Z" fill="#666"/></svg>
<div class="t" style="left:274.8px;top:169.00px;font-size:11px;color:#333;letter-spacing:-0.25px;">Vörunúmer</div>
<div class="t" style="left:382.5px;top:169.00px;font-size:11px;color:#333;letter-spacing:-0.25px;">Vörulýsing</div>
<div class="t" style="left:271.5px;top:192.00px;font-size:11px;color:#333;">04</div>
<div class="t" style="left:378px;top:192.00px;font-size:11px;color:#111;letter-spacing:-0.2px;">blað</div>
<div class="t" style="left:271.5px;top:210.00px;font-size:11px;color:#333;">02</div>
<div class="t" style="left:378px;top:210.00px;font-size:11px;color:#111;letter-spacing:-0.2px;">Parketlegn</div>
<div class="t" style="left:271.5px;top:228.00px;font-size:11px;color:#333;">03</div>
<div class="t" style="left:378px;top:228.00px;font-size:11px;color:#111;letter-spacing:-0.2px;">Smíða sólpall</div>
<div class="t" style="left:271.5px;top:246.00px;font-size:11px;color:#f0f000;">01</div>
<div class="a" style="left:377px;top:242px;width:20px;height:17px;overflow:hidden">
<div class="t" style="left:1px;top:4.00px;font-size:11px;color:#f0f000;letter-spacing:-0.2px;">Viðgerð á timburpalli</div>
</div>
<div class="a" style="left:397px;top:242px;width:18px;height:17px;overflow:hidden">
<div class="t" style="left:-19px;top:4.00px;font-size:11px;color:#e8e8f4;letter-spacing:-0.2px;">Viðgerð á timburpalli</div>
</div>
<div class="a" style="left:245px;top:673px;width:1258px;height:1px;background:#d8d8d8;"></div>
<div class="a" style="left:245px;top:674px;width:1258px;height:2px;background:#f4f4f4;"></div>
<div class="a" style="left:238px;top:676px;width:1265px;height:1px;background:#d0d0d0;"></div>
<div class="a" style="left:246px;top:677px;width:1257px;height:10px;background:#f7f7f7;"></div>
<div class="a" style="left:246px;top:687px;width:1257px;height:1px;background:#a8a8a8;"></div>
<div class="a" style="left:246px;top:687px;width:1px;height:207px;background:#a8a8a8;"></div>
<div class="a" style="left:247px;top:688px;width:1256px;height:206px;background:#ffffff;"></div>
<div class="a" style="left:248px;top:689px;width:1255px;height:2px;background:#d3d3d3;"></div>
<div class="a" style="left:248px;top:689px;width:2px;height:203px;background:#d3d3d3;"></div>
<div class="a" style="left:248px;top:892px;width:1255px;height:1px;background:#d8d8d8;"></div>
<div class="a" style="left:250px;top:889px;width:1253px;height:1px;background:#d8d8d8;"></div>
<div class="a" style="left:253px;top:694px;width:1250px;height:193px;background:#ffffff;border:1px solid #a0a0a0;border-right:none"></div>
<div class="a" style="left:254px;top:695px;width:1249px;height:28px;background:#f7f7f7;"></div>
<div class="a" style="left:254px;top:723px;width:1249px;height:1px;background:#a0a0a0;"></div>
<div class="a" style="left:271px;top:695px;width:1px;height:28px;background:#a0a0a0;"></div>
<div class="a" style="left:397px;top:695px;width:1px;height:28px;background:#a0a0a0;"></div>
<div class="a" style="left:254px;top:871px;width:1249px;height:1px;background:#d0d0d0;"></div>
<svg class="a" style="left:258px;top:704px" width="9" height="9" viewBox="0 0 9 9"><path d="M4.5 0.5 V8.5 M0.5 4.5 H8.5 M1.7 1.7 L7.3 7.3 M7.3 1.7 L1.7 7.3" stroke="#ff8c1a" stroke-width="1.1"/><circle cx="4.5" cy="4.5" r="2" fill="#ff8c1a"/></svg>
<svg class="a" style="left:277px;top:699px" width="16" height="16" viewBox="0 0 16 16"><circle cx="6" cy="6" r="4.5" fill="none" stroke="#3b86c9" stroke-width="1.6"/><path d="M9.5 9.5 L14.5 14.5" stroke="#1d5ca3" stroke-width="2.8"/></svg>
<div class="t" style="left:294.5px;top:704.00px;font-size:11px;color:#333;letter-spacing:-0.25px;">Vörunúmer</div>
<div class="t" style="left:403px;top:704.00px;font-size:11px;color:#333;letter-spacing:-0.25px;">Strikamerki</div>
<div class="a" style="left:246px;top:894px;width:1257px;height:61px;background:#f7f7f7;"></div>
<div class="a" style="left:247px;top:894px;width:90px;height:30px;background:#f7f7f7;border:1px solid #c0c0c0;border-top:none"></div>
<div class="a" style="left:337px;top:895px;width:66px;height:28px;background:#ececec;border-right:1px solid #d8d8d8"></div>
<div class="a" style="left:403px;top:895px;width:100px;height:28px;background:#ececec;"></div>
<div class="a" style="left:337px;top:894px;width:1166px;height:1px;background:#b4b4b4;"></div>
<svg class="a" style="left:255px;top:900px" width="17" height="17" viewBox="0 0 17 17"><g shape-rendering="crispEdges"><path d="M1.5 2.5 Q8 0.5 15.5 2.5 V15.5 H1.5 Z" fill="#fff" stroke="#556" stroke-width="1"/><path d="M3.5 4 V12 M5.5 4 V10 M7.5 4 V10 M9.5 4 V12 M11.5 4 V10 M13.5 4 V12" stroke="#111" stroke-width="1"/><path d="M6 12.5 H12" stroke="#777" stroke-width="1"/></g></svg>
<div class="t" style="left:276.4px;top:904.00px;font-size:11px;color:#333;letter-spacing:-0.25px;">Strikamerki</div>
<svg class="a" style="left:344px;top:900px" width="15" height="17" viewBox="0 0 15 17"><path d="M1 16.5 Q1 10 7.5 10 Q14 10 14 16.5 Z" fill="#7a8a9a"/><path d="M6.5 10 L7.5 15 L8.5 10 Z" fill="#1e7ad8"/><circle cx="7.5" cy="5.5" r="3.8" fill="#e8c07a"/><path d="M3.5 4.5 Q7.5 0 11.5 4.5 Q10 2 7.5 2.5 Q5 2 3.5 4.5" fill="#8a6030"/></svg>
<div class="t" style="left:364px;top:904.00px;font-size:11px;color:#333;letter-spacing:-0.25px;">Birgjar</div>
<svg class="a" style="left:410px;top:901px" width="8" height="14" viewBox="0 0 8 14"><rect x="0.5" y="0.5" width="7" height="13" fill="#f4f4f4" stroke="#999" stroke-width="1"/></svg>
<div class="a" style="left:252px;top:929px;width:80px;height:22px;background:#ffffff;border:1px solid #a9a9a9"></div>
<div class="t" style="left:271px;top:935.00px;font-size:10.5px;color:#111;font-weight:700;font-family:'Liberation Serif',serif;">F1</div>
<div class="t" style="left:290px;top:935.00px;font-size:11px;color:#333;letter-spacing:-0.2px;">Hjálp</div>
<div class="a" style="left:336px;top:929px;width:80px;height:22px;background:#ffffff;border:1px solid #a9a9a9"></div>
<div class="t" style="left:348px;top:935.00px;font-size:10.5px;color:#111;font-weight:700;font-family:'Liberation Serif',serif;">F5</div>
<div class="t" style="left:368px;top:935.00px;font-size:11px;color:#333;letter-spacing:-0.2px;">Valmynd</div>
<div class="a" style="left:246px;top:955px;width:1257px;height:19px;background:#f6f6f6;"></div>
<div class="a" style="left:246px;top:955px;width:1257px;height:1px;background:#e0e0e0;"></div>
<div class="t" style="left:253px;top:960.00px;font-size:11px;color:#333;">{4}</div>
<div class="a" style="left:289px;top:956px;width:70px;height:17px;background:#ffffff;border:1px solid #a9a9a9"></div>
<div class="a" style="left:359px;top:956px;width:2px;height:18px;background:#d8d8d8;"></div>
<div class="t" style="left:292px;top:960.00px;font-size:11px;color:#333;letter-spacing:-0.25px;">Telja færslur</div>
<div class="a" style="left:364px;top:956px;width:16px;height:17px;background:#ffffff;border:1px solid #a9a9a9"></div>
<div class="t" style="left:385px;top:960.00px;font-size:11px;color:#333;letter-spacing:-0.25px;">Sýna l</div>
<div class="a" style="left:238px;top:974px;width:1265px;height:8px;background:#ececec;"></div>
<div class="a" style="left:245px;top:972px;width:1258px;height:2px;background:#d4d4d4;"></div>
<div class="a" style="left:245px;top:955px;width:2px;height:19px;background:#d4d4d4;"></div>
<div class="a" style="left:415px;top:126px;width:884px;height:871px;background:#1a73cf;"></div>
<div class="a" style="left:416px;top:126px;width:882px;height:870px;background:#fbfbfb;"></div>
<div class="a" style="left:423px;top:128px;width:868px;height:30px;background:#a2a1a6;"></div>
<div class="a" style="left:423px;top:158px;width:868px;height:2px;background:#f4f4f4;"></div>
<div class="a" style="left:423px;top:159px;width:868px;height:1px;background:#dedede;"></div>
<div class="t" style="left:438.5px;top:139.00px;font-size:12px;color:#ffffff;font-weight:700;">01 - Viðgerð á timburpalli</div>
<svg class="a" style="left:1186px;top:135px" width="16" height="16" viewBox="0 0 16 16"><rect x="1" y="1.5" width="3" height="12" fill="#3b8ad6"/><path d="M12 1 L14 3 L9.5 7.5 L14 12 L12 14 L5.5 7.5 Z" fill="#3b8ad6" stroke="#111" stroke-width="0.9" stroke-linejoin="round"/></svg>
<svg class="a" style="left:1214px;top:135px" width="12" height="16" viewBox="0 0 12 16"><path d="M8 1 L10 3 L5.5 7.5 L10 12 L8 14 L1.5 7.5 Z" fill="#3b8ad6" stroke="#111" stroke-width="0.9" stroke-linejoin="round"/></svg>
<svg class="a" style="left:1243px;top:135px" width="12" height="16" viewBox="0 0 12 16"><path d="M3.5 1 L1.5 3 L6 7.5 L1.5 12 L3.5 14 L10 7.5 Z" fill="#3b8ad6" stroke="#111" stroke-width="0.9" stroke-linejoin="round"/></svg>
<svg class="a" style="left:1268px;top:135px" width="16" height="16" viewBox="0 0 16 16"><path d="M3.5 1 L1.5 3 L6 7.5 L1.5 12 L3.5 14 L10 7.5 Z" fill="#3b8ad6" stroke="#111" stroke-width="0.9" stroke-linejoin="round"/><rect x="11.5" y="1.5" width="3" height="12" fill="#3b8ad6"/></svg>
<div class="a" style="left:423px;top:190px;width:868px;height:754px;background:#f8f8f8;border:1px solid #a8a8a8;border-top:1px solid #a8a8a8"></div>
<div class="a" style="left:425px;top:163px;width:52px;height:28px;background:#efefef;border:1px solid #c4c4c4;border-bottom:1px solid #a8a8a8"></div>
<div class="t" style="left:431.5px;top:174.00px;font-size:11px;color:#333;letter-spacing:-0.2px;">Almennt</div>
<div class="a" style="left:478px;top:161px;width:35px;height:30px;background:#f8f8f8;border:1px solid #a8a8a8;border-bottom:none"></div>
<div class="a" style="left:482px;top:172px;width:30px;height:19px;background:#f6e800;"></div>
<div class="t" style="left:483px;top:172.00px;font-size:11px;color:#222;letter-spacing:-0.2px;">Sala</div>
<div class="a" style="left:513px;top:163px;width:53px;height:28px;background:#efefef;border:1px solid #c4c4c4;border-bottom:1px solid #a8a8a8"></div>
<div class="t" style="left:519.5px;top:174.00px;font-size:11px;color:#333;letter-spacing:-0.2px;">Innkaup</div>
<div class="a" style="left:566px;top:163px;width:35px;height:28px;background:#efefef;border:1px solid #c4c4c4;border-bottom:1px solid #a8a8a8"></div>
<div class="t" style="left:572.5px;top:174.00px;font-size:11px;color:#333;letter-spacing:-0.2px;">Verð</div>
<div class="a" style="left:601px;top:163px;width:97px;height:28px;background:#efefef;border:1px solid #c4c4c4;border-bottom:1px solid #a8a8a8"></div>
<div class="t" style="left:607.5px;top:174.00px;font-size:11px;color:#333;letter-spacing:-0.2px;">Aukavörulýsingar</div>
<div class="a" style="left:698px;top:163px;width:43px;height:28px;background:#efefef;border:1px solid #c4c4c4;border-bottom:1px solid #a8a8a8"></div>
<div class="t" style="left:704.5px;top:174.00px;font-size:11px;color:#333;letter-spacing:-0.2px;">dkPos</div>
<div class="a" style="left:741px;top:163px;width:45px;height:28px;background:#efefef;border:1px solid #c4c4c4;border-bottom:1px solid #a8a8a8"></div>
<div class="t" style="left:747.5px;top:174.00px;font-size:11px;color:#333;letter-spacing:-0.2px;">Myndir</div>
<div class="a" style="left:423px;top:190px;width:2px;height:1px;background:#a8a8a8;"></div>
<div class="a" style="left:435px;top:202px;width:360px;height:116px;background:#f8f8f8;border:1px solid #d4d4d4"></div>
<div class="a" style="left:436px;top:203px;width:358px;height:19px;background:#e5e5e5;"></div>
<div class="a" style="left:436px;top:221px;width:358px;height:1px;background:#d4d4d4;"></div>
<div class="t" style="left:446px;top:206.00px;font-size:12px;color:#333;font-weight:700;">Almennt</div>
<div class="a" style="left:435px;top:324px;width:360px;height:247px;background:#f8f8f8;border:1px solid #d4d4d4"></div>
<div class="a" style="left:436px;top:325px;width:358px;height:19px;background:#e5e5e5;"></div>
<div class="a" style="left:436px;top:343px;width:358px;height:1px;background:#d4d4d4;"></div>
<div class="t" style="left:446px;top:328.00px;font-size:12px;color:#333;font-weight:700;">Við sölu</div>
<div class="a" style="left:801px;top:202px;width:379px;height:169px;background:#f8f8f8;border:1px solid #d4d4d4"></div>
<div class="a" style="left:802px;top:203px;width:377px;height:19px;background:#e5e5e5;"></div>
<div class="a" style="left:802px;top:221px;width:377px;height:1px;background:#d4d4d4;"></div>
<div class="t" style="left:812px;top:206.00px;font-size:12px;color:#333;font-weight:700;">Afslættir</div>
<div class="a" style="left:801px;top:377px;width:379px;height:243px;background:#f8f8f8;border:1px solid #d4d4d4"></div>
<div class="a" style="left:802px;top:378px;width:377px;height:19px;background:#e5e5e5;"></div>
<div class="a" style="left:802px;top:396px;width:377px;height:1px;background:#d4d4d4;"></div>
<div class="t" style="left:812px;top:381.00px;font-size:12px;color:#333;font-weight:700;">Rofar</div>
<div class="t" style="left:446px;top:237.00px;font-size:11px;color:#333;letter-spacing:-0.28px;">VSK flokkur við sölu:</div>
<div class="inp" style="left:569px;top:233px;width:68px;height:19px;border-color:#6b6b6b"></div>
<div class="a" style="left:571px;top:236px;width:13px;height:13px;background:#3076d4;"></div>
<div class="t" style="left:571.5px;top:237.00px;font-size:11px;color:#ffffff;letter-spacing:-0.2px;">U1</div>
<div class="t" style="left:623.5px;top:237.00px;font-size:10px;color:#444;letter-spacing:-0.5px;">···</div>
<div class="t" style="left:646.5px;top:236.00px;font-size:11px;color:#0c0c80;letter-spacing:-0.043px;">Útskattur v/24%</div>
<div class="t" style="left:446px;top:264.00px;font-size:11px;color:#333;letter-spacing:-0.184px;">Bókunarflokkur sölu:</div>
<div class="inp" style="left:569px;top:260px;width:68px;height:19px;border-color:#a9a9a9"></div>
<div class="t" style="left:571.5px;top:264.00px;font-size:11px;color:#222;letter-spacing:-0.2px;">S001</div>
<div class="t" style="left:623.5px;top:264.00px;font-size:10px;color:#444;letter-spacing:-0.5px;">···</div>
<div class="t" style="left:646.5px;top:263.00px;font-size:11px;color:#0c0c80;letter-spacing:-0.206px;">Seld þjónusta</div>
<div class="t" style="left:446px;top:291.00px;font-size:11px;color:#333;letter-spacing:-0.319px;">Birgðamódel:</div>
<div class="inp" style="left:569px;top:287px;width:68px;height:19px;border-color:#a9a9a9"></div>
<div class="t" style="left:571.5px;top:291.00px;font-size:11px;color:#222;letter-spacing:-0.2px;">FIFO</div>
<svg class="a" style="left:624px;top:295px" width="7" height="4" viewBox="0 0 7 4"><path d="M0 0 H7 L3.5 3.5 Z" fill="#808080"/></svg>
<div class="t" style="left:446px;top:359.00px;font-size:11px;color:#333;letter-spacing:0.004px;">Nota varanúmer:</div>
<div class="cb" style="left:568px;top:356px"></div>
<div class="t" style="left:446px;top:385.00px;font-size:11px;color:#333;letter-spacing:-0.066px;">Varanúmer:</div>
<div class="inp" style="left:569px;top:381px;width:149px;height:19px;border-color:#a9a9a9"></div>
<div class="t" style="left:703px;top:385.00px;font-size:10px;color:#444;letter-spacing:-0.5px;">···</div>
<div class="t" style="left:446px;top:439.00px;font-size:11px;color:#333;letter-spacing:-0.222px;">Sölueining:</div>
<div class="inp" style="left:569px;top:435px;width:79px;height:19px;border-color:#a9a9a9"></div>
<div class="t" style="left:572px;top:439.00px;font-size:11px;color:#222;letter-spacing:-0.2px;">Klst</div>
<div class="t" style="left:632px;top:439.00px;font-size:10px;color:#444;letter-spacing:-0.5px;">···</div>
<div class="t" style="left:656.7px;top:438.00px;font-size:11px;color:#0c0c80;letter-spacing:-0.157px;">Klukkustundir</div>
<div class="t" style="left:446px;top:466.00px;font-size:11px;color:#333;letter-spacing:-0.103px;">Sjálfgefið sölumagn:</div>
<div class="inp" style="left:569px;top:462px;width:79px;height:19px;border-color:#a9a9a9"></div>
<div class="t" style="left:605px;top:466.00px;font-size:11px;color:#222;letter-spacing:-0.2px;">1,00</div>
<svg class="a" style="left:634px;top:470px" width="7" height="4" viewBox="0 0 7 4"><path d="M0 0 H7 L3.5 3.5 Z" fill="#808080"/></svg>
<div class="t" style="left:446px;top:493.00px;font-size:11px;color:#333;letter-spacing:-0.076px;">Neikvæðar birgðir:</div>
<div class="cb" style="left:568px;top:490px"></div>
<svg class="a" style="left:568px;top:490px" width="16" height="16" viewBox="0 0 16 16"><path d="M3.5 8 L6.5 11 L12.5 4.5" fill="none" stroke="#8a8a8a" stroke-width="1.3"/></svg>
<div class="t" style="left:446px;top:519.00px;font-size:11px;color:#333;letter-spacing:0.012px;">Bannað að br. ein.verði:</div>
<div class="cb" style="left:568px;top:516px"></div>
<div class="t" style="left:446px;top:545.00px;font-size:11px;color:#333;letter-spacing:-0.053px;">Slá inn kostn.verð:</div>
<div class="cb" style="left:568px;top:542px"></div>
<div class="t" style="left:590px;top:545.00px;font-size:11px;color:#333;letter-spacing:-0.295px;">Selt í heilum einingum:</div>
<div class="cb" style="left:700px;top:542px"></div>
<div class="t" style="left:812px;top:237.00px;font-size:11px;color:#333;letter-spacing:0.116px;">Leyfa afslátt:</div>
<div class="cb" style="left:943px;top:234px"></div>
<svg class="a" style="left:943px;top:234px" width="16" height="16" viewBox="0 0 16 16"><path d="M3.5 8 L6.5 11 L12.5 4.5" fill="none" stroke="#8a8a8a" stroke-width="1.3"/></svg>
<div class="t" style="left:812px;top:263.00px;font-size:11px;color:#333;letter-spacing:0.006px;">Afsláttarmagn:</div>
<div class="inp" style="left:944px;top:259px;width:78px;height:19px;border-color:#a9a9a9"></div>
<div class="t" style="left:980px;top:263.00px;font-size:11px;color:#222;letter-spacing:-0.2px;">0,00</div>
<svg class="a" style="left:1009px;top:267px" width="7" height="4" viewBox="0 0 7 4"><path d="M0 0 H7 L3.5 3.5 Z" fill="#808080"/></svg>
<div class="t" style="left:812px;top:290.00px;font-size:11px;color:#333;letter-spacing:0.159px;">Afsláttur:</div>
<div class="inp" style="left:944px;top:286px;width:78px;height:19px;border-color:#a9a9a9"></div>
<div class="t" style="left:980px;top:290.00px;font-size:11px;color:#222;letter-spacing:-0.2px;">0,00</div>
<svg class="a" style="left:1009px;top:294px" width="7" height="4" viewBox="0 0 7 4"><path d="M0 0 H7 L3.5 3.5 Z" fill="#808080"/></svg>
<div class="t" style="left:812px;top:317.00px;font-size:11px;color:#333;letter-spacing:-0.069px;">Hámarks afsláttur:</div>
<div class="inp" style="left:944px;top:313px;width:78px;height:19px;border-color:#a9a9a9"></div>
<div class="t" style="left:980px;top:317.00px;font-size:11px;color:#222;letter-spacing:-0.2px;">0,00</div>
<svg class="a" style="left:1009px;top:321px" width="7" height="4" viewBox="0 0 7 4"><path d="M0 0 H7 L3.5 3.5 Z" fill="#808080"/></svg>
<div class="t" style="left:812px;top:344.00px;font-size:11px;color:#333;letter-spacing:0.07px;">Afsláttarflokkur:</div>
<div class="inp" style="left:944px;top:340px;width:78px;height:19px;border-color:#a9a9a9"></div>
<div class="t" style="left:1007px;top:344.00px;font-size:10px;color:#444;letter-spacing:-0.5px;">···</div>
<div class="a" style="left:805px;top:564px;width:182px;height:19px;background:#f6e800;"></div>
<div class="t" style="left:812px;top:412.00px;font-size:11px;color:#333;letter-spacing:-0.219px;">Bannað að senda á kassa:</div>
<div class="cb" style="left:943px;top:409px"></div>
<div class="t" style="left:812px;top:438.00px;font-size:11px;color:#333;letter-spacing:-0.102px;">Ekki leyft að selja:</div>
<div class="cb" style="left:943px;top:435px"></div>
<div class="t" style="left:812px;top:464.00px;font-size:11px;color:#333;letter-spacing:-0.245px;">Skrá tilvísun á sölulínu:</div>
<div class="cb" style="left:943px;top:461px"></div>
<div class="t" style="left:812px;top:490.00px;font-size:11px;color:#333;letter-spacing:0.045px;">Vigtarvara:</div>
<div class="cb" style="left:943px;top:487px"></div>
<div class="t" style="left:812px;top:516.00px;font-size:11px;color:#333;letter-spacing:-0.088px;">Prenta aukavörulýsingu:</div>
<div class="cb" style="left:943px;top:513px"></div>
<div class="t" style="left:812px;top:542.00px;font-size:11px;color:#333;letter-spacing:-0.065px;">Á vinsældarlista:</div>
<div class="cb" style="left:943px;top:539px"></div>
<div class="t" style="left:812px;top:568.00px;font-size:11px;color:#333;letter-spacing:-0.08px;">Sýna í vefverslun:</div>
<div class="cb" style="left:943px;top:565px;background:#f6e800;border-color:#a9a000"></div>
<div class="t" style="left:812px;top:594.00px;font-size:11px;color:#333;letter-spacing:-0.1px;">Tilvísun fjárhagsbókunar:</div>
<div class="inp" style="left:944px;top:590px;width:68px;height:19px;border-color:#a9a9a9"></div>
<div class="a" style="left:422px;top:945px;width:870px;height:45px;background:#f8f8f8;border:2px solid #d6d6d6;border-top:1px solid #e4e4e4"></div>
<div class="a" style="left:423px;top:943px;width:868px;height:2px;background:#b0b0b0;"></div>
<div class="a" style="left:434px;top:955px;width:80px;height:22px;background:#ffffff;border:1px solid #a9a9a9"></div>
<div class="t" style="left:453.7px;top:961.00px;font-size:10.5px;color:#111;font-weight:700;font-family:'Liberation Serif',serif;">F1</div>
<div class="t" style="left:474px;top:961.00px;font-size:11px;color:#333;letter-spacing:-0.1px;">Hjálp</div>
<div class="a" style="left:520px;top:955px;width:80px;height:22px;background:#ffffff;border:1px solid #a9a9a9"></div>
<div class="t" style="left:528.5px;top:961.00px;font-size:10.5px;color:#111;font-weight:700;font-family:'Liberation Serif',serif;">F2</div>
<div class="t" style="left:548.9px;top:961.00px;font-size:11px;color:#333;letter-spacing:-0.1px;">Fletta</div>
<div class="a" style="left:606px;top:955px;width:80px;height:22px;background:#ffffff;border:1px solid #a9a9a9"></div>
<div class="t" style="left:617.6px;top:961.00px;font-size:10.5px;color:#111;font-weight:700;font-family:'Liberation Serif',serif;">F5</div>
<div class="t" style="left:637.6px;top:961.00px;font-size:11px;color:#333;letter-spacing:-0.1px;">Valmynd</div>
<div class="a" style="left:692px;top:955px;width:80px;height:22px;background:#ffffff;border:1px solid #a9a9a9"></div>
<div class="t" style="left:705.3px;top:961.00px;font-size:10.5px;color:#111;font-weight:700;font-family:'Liberation Serif',serif;">ESC</div>
<div class="t" style="left:732px;top:961.00px;font-size:11px;color:#333;letter-spacing:-0.1px;">Hætta</div>
<div class="a" style="left:778px;top:955px;width:80px;height:22px;background:#ffffff;border:1px solid #a9a9a9"></div>
<div class="t" style="left:795.6px;top:961.00px;font-size:10.5px;color:#111;font-weight:700;font-family:'Liberation Serif',serif;">F12</div>
<div class="t" style="left:819px;top:961.00px;font-size:11px;color:#333;letter-spacing:-0.1px;">Skrá</div>
</body></html>
